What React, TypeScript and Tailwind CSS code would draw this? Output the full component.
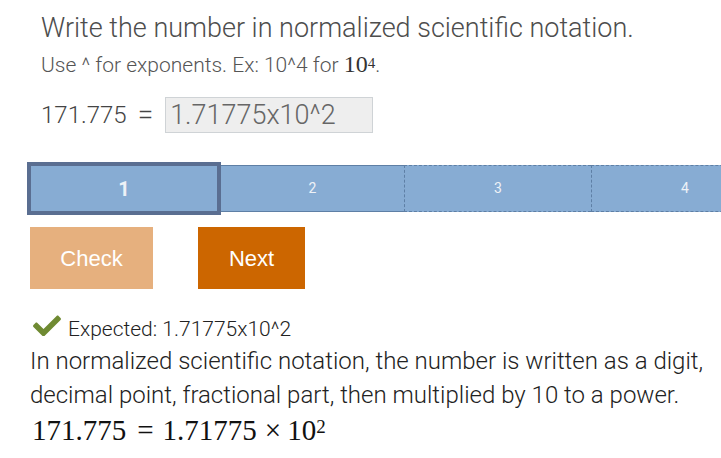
import React from 'react';

const roboto = { fontFamily: 'Roboto, "Noto Sans", sans-serif' };
const serif = { fontFamily: '"Liberation Serif", "Times New Roman", serif' };

function CheckIcon() {
  return (
    <svg viewBox="0 0 512 440" className="w-[30px] h-[24px] mt-[-3px] shrink-0" fill="#6f8a32">
      <path d="M173.898 439.404l-166.4-166.4c-9.997-9.997-9.997-26.206 0-36.204l36.203-36.204c9.997-9.998 26.207-9.998 36.204 0L192 312.69 432.095 72.596c9.997-9.997 26.207-9.997 36.204 0l36.203 36.204c9.997 9.997 9.997 26.206 0 36.204l-294.4 294.401c-9.998 9.997-26.207 9.997-36.204-.001z" />
    </svg>
  );
}

function ProgressBar() {
  const rest = [
    { n: 2, w: 'w-[183px]' },
    { n: 3, w: 'w-[187px]' },
    { n: 4, w: 'w-[187px]' },
  ];
  return (
    <div className="flex items-center ml-[27px] h-[53px]">
      <div className="w-[194px] h-[53px] shrink-0 border-4 border-[#5a6e91] bg-[#87acd3] flex items-center justify-center">
        <span className="text-[20px] font-bold text-[#eef2f7]" style={roboto}>1</span>
      </div>
      {rest.map((s, i) => (
        <div
          key={s.n}
          className={`${s.w} h-[47px] shrink-0 bg-[#87acd3] border-y border-[#5e7fa5] flex items-center justify-center ${i > 0 ? 'border-l border-l-[#5e7fa5] border-dashed' : ''}`}
        >
          <span className="text-[14px] text-[#eef2f7]" style={roboto}>{s.n}</span>
        </div>
      ))}
    </div>
  );
}

export default function App() {
  return (
    <div className="w-[721px] h-[458px] overflow-hidden bg-white" style={roboto}>
      <h1 className="ml-[41px] pt-[12px] text-[27px] leading-[32px] font-light text-[#4d4d4d]">
        Write the number in normalized scientific notation.
      </h1>
      <p className="ml-[41px] mt-[7px] text-[21px] leading-[28px] font-light text-[#555]">
        Use ^ for exponents. Ex: 10^4 for{' '}
        <span className="text-[24px] leading-none text-[#333]" style={serif}>
          10<sup className="text-[15px] relative -top-[4px]">4</sup>
        </span>
        .
      </p>
      <div className="ml-[41px] mt-[18px] flex items-center h-[36px]">
        <span className="text-[24px] leading-[36px] font-light text-[#444]">171.775</span>
        <span className="text-[28px] leading-[36px] font-light text-[#444] ml-[11px] mr-[12px]">=</span>
        <div className="w-[208px] h-[36px] bg-[#eeeeee] border border-[#cfd3d6] flex items-center pl-[4px]">
          <span className="text-[27px] leading-[34px] font-light text-[#666]">1.71775x10^2</span>
        </div>
      </div>
      <div className="mt-[29px]">
        <ProgressBar />
      </div>
      <div className="ml-[30px] mt-[12px] flex gap-[45px]" style={{ fontFamily: '"Liberation Sans", Arial, sans-serif' }}>
        <button className="w-[123px] h-[62px] bg-[#e6b07e] text-white text-[22px]">Check</button>
        <button className="w-[107px] h-[62px] bg-[#cc6600] text-white text-[22px]">Next</button>
      </div>
      <div className="ml-[32px] mt-[26px] flex items-start gap-[6px]">
        <CheckIcon />
        <span className="text-[21px] leading-[28px] font-light text-[#222]">Expected: 1.71775x10^2</span>
      </div>
      <p className="ml-[30px] mt-[1px] text-[24px] leading-[34px] font-light text-[#222] w-[690px]">
        In normalized scientific notation, the number is written as a digit, decimal point, fractional part, then multiplied by 10 to a power.
      </p>
      <div className="ml-[32px] text-[29px] leading-[36px] text-[#111]" style={serif}>
        171.775<span className="ml-[11px] mr-[9px]">=</span>1.71775<span className="ml-[8px] mr-[6px]">×</span>10<sup className="text-[19px] relative -top-[7px]">2</sup>
      </div>
    </div>
  );
}
